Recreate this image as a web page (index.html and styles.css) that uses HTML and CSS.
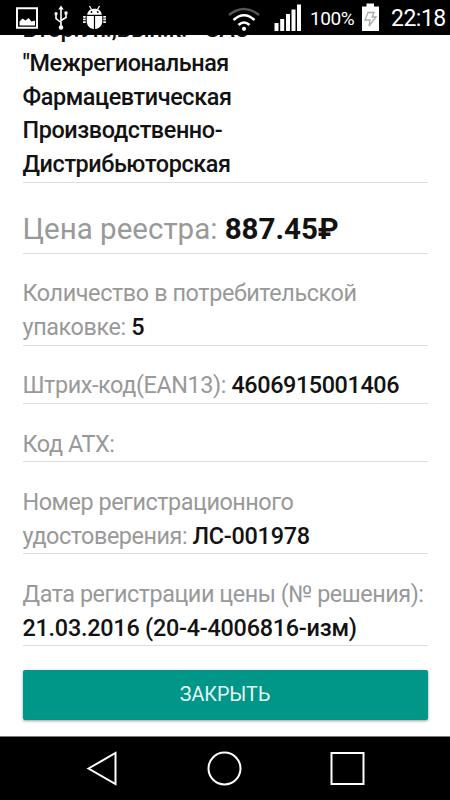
FILE: index.html
```html
<!DOCTYPE html>
<html lang="ru">
<head>
<meta charset="utf-8">
<title>Цена реестра</title>
<link rel="stylesheet" href="styles.css">
</head>
<body>
<div class="screen">
  <header class="status">
    <svg class="status-left" width="120" height="35" viewBox="0 0 120 35">
      <path d="M17 8.200h20v19.600h-20z" fill="none" stroke="#fff" stroke-width="2"/>
      <path d="M19.500 25.500v-4l3-3 3 2 3-2.500 3 3.500 3-1 .5 1v4z" fill="#fff"/>
      <g fill="none" stroke="#fff" stroke-width="1.600">
        <path d="M61 8v19M56 14v4.500l5 4M66 13v4.500l-5 3"/>
      </g>
      <path d="M61 5.500l2.700 4h-5.400z" fill="#fff"/>
      <circle cx="61" cy="27.500" r="2.200" fill="#fff"/>
      <circle cx="56" cy="13.700" r="1.600" fill="#fff"/>
      <path d="M64.500 11.500h3v3h-3z" fill="#fff"/>
      <path d="M87.200 14.800c.3-4 3.300-6.100 7.300-6.100s7 2.100 7.300 6.100zM86.700 16h7.200v13c-4.400-.3-7.200-3.500-7.200-8zM95.100 16h7.200v5c0 4.500-2.800 7.700-7.200 8z" fill="#fff"/>
      <path d="M91.500 9.500l-2-3.500M97.500 9.500l2-3.500" stroke="#fff" stroke-width="1.300"/>
      <circle cx="91.500" cy="12" r=".9"/><circle cx="97.700" cy="12" r=".9"/>
      <path d="M84.400 16v7M104.600 16v7" stroke="#fff" stroke-width="2.600" stroke-dasharray="1.700 .9"/>
    </svg>
    <svg class="status-signal" width="80" height="35" viewBox="224 0 80 35">
      <g fill="none" stroke="#fff" stroke-width="2.600">
        <path d="M229 15q15-12 30 0" stroke="#555"/>
        <path d="M233.500 20q10.500-9.500 21 0M238.500 25q5.500-5 11 0"/>
      </g>
      <circle cx="244" cy="28.800" r="2.100" fill="#fff"/>
      <path d="M274.500 23h4v8h-4zM280.200 19h4v12h-4zM286 14h4v17h-4zM291.500 9.500h4V31h-4zM297 4.500h4V31h-4z" fill="#fff"/>
    </svg>
    <span class="percent">100%</span>
    <svg class="battery" width="18" height="35" viewBox="361 0 18 35">
      <path d="M362 6.500h4.500v-3h7.500v3h5V31h-17z" fill="#fff"/>
      <path d="M368 12.500h6l-2 4.500h4l-7 9 1-6h-5z" fill="#fff" stroke="#aaa" stroke-width="1.300"/>
    </svg>
    <span class="clock">22:18</span>
  </header>
  <main class="content">
    <section class="row maker"><b>Втор.Уп.,Вып.к. - ЗАО<br>"Межрегиональная<br>Фармацевтическая<br>Производственно-<br>Дистрибьюторская</b></section>
    <section class="row price">Цена реестра: <b>887.45₽</b></section>
    <section class="row">Количество в потребительской<br>упаковке: <b>5</b></section>
    <section class="row">Штрих-код(EAN13): <b>4606915001406</b></section>
    <section class="row">Код АТХ:</section>
    <section class="row tight">Номер регистрационного<br>удостоверения: <b class="wide">ЛС-001978</b></section>
    <section class="row tight">Дата регистрации цены (№ решения):<br><b class="wide">21.03.2016 (20-4-4006816-изм)</b></section>
    <button class="close">ЗАКРЫТЬ</button>
  </main>
  <nav class="nav">
    <svg width="450" height="64" viewBox="0 736 450 64" fill="none" stroke="#fff" stroke-width="2">
      <path d="M88.500 768.500L115.500 753v31z"/>
      <circle cx="224.500" cy="768.500" r="16"/>
      <path d="M331.500 753h32v31h-32z"/>
    </svg>
  </nav>
</div>
</body>
</html>
```

FILE: styles.css
```css
* { box-sizing: border-box; }
body { margin: 0; background: #fff; font-family: Roboto, sans-serif; }
.screen { width: 450px; height: 800px; display: flex; flex-direction: column; overflow: hidden; }
.status { flex: none; height: 35px; display: flex; align-items: center; background: #000; color: #fff; }
.status svg { display: block; flex: none; }
.status-signal { margin-left: 104px; }
.percent { width: 57px; padding: 3px 0 0 6px; font-size: 19px; line-height: 32px; letter-spacing: -.4px; white-space: nowrap; }
.clock { padding: 2px 0 0 12px; font-size: 23px; line-height: 33px; letter-spacing: -.5px; white-space: nowrap; }
.content { flex: 1; min-height: 0; overflow: hidden; display: flex; flex-direction: column; padding: 0 22.500px; }
.row { flex: none; padding-top: 23.500px; border-bottom: 1.500px solid #dedede; color: #999; font-size: 23.400px; letter-spacing: -.4px; line-height: 33.750px; white-space: nowrap; }
.row b { color: #121212; font-weight: 500; }
.tight { letter-spacing: -.46px; }
.row .wide { letter-spacing: -.24px; }
.maker { margin-top: -22px; padding-top: 0; }
.row.price { font-size: 29.500px; letter-spacing: 0; padding-top: 25px; padding-bottom: 3px; line-height: 42px; }
.row.price b { font-weight: 700; }
.close { flex: none; height: 50px; margin-top: 24px; padding: 0 0 2px; border: 0; border-radius: 2px; background: #009688; color: #e6f5f3; font: 400 19.700px Roboto, sans-serif; box-shadow: 0 1px 3px rgba(0,0,0,.4); }
.nav { flex: 0 0 64px; background: #000; border-top: 1px solid #777; }
.nav svg { display: block; margin-top: -1px; }
```
